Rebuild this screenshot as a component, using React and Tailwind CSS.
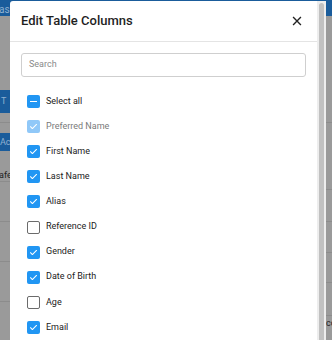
import React from 'react'

const columns = [
  { label: 'Preferred Name', checked: true, disabled: true },
  { label: 'First Name', checked: true },
  { label: 'Last Name', checked: true },
  { label: 'Alias', checked: true },
  { label: 'Reference ID', checked: false },
  { label: 'Gender', checked: true },
  { label: 'Date of Birth', checked: true },
  { label: 'Age', checked: false },
  { label: 'Email', checked: true },
]

function Box({ checked, disabled, indeterminate }) {
  if (indeterminate) {
    return (
      <span className="w-[13px] h-[13px] rounded-[2px] bg-[#2196f3] flex items-center justify-center shrink-0">
        <span className="w-[7px] h-[1.5px] bg-white" />
      </span>
    )
  }
  if (!checked) {
    return <span className="w-[13px] h-[13px] rounded-[2px] border-[1.5px] border-[#6b6b6b] shrink-0" />
  }
  return (
    <span className={`w-[13px] h-[13px] rounded-[2px] flex items-center justify-center shrink-0 ${disabled ? 'bg-[#90c8f8]' : 'bg-[#2196f3]'}`}>
      <svg width="9" height="9" viewBox="0 0 24 24" fill="none">
        <path d="M4 12.5l5 5L20 6.5" stroke="white" strokeWidth="2.8" strokeLinecap="round" strokeLinejoin="round" />
      </svg>
    </span>
  )
}

export default function App() {
  return (
    <div className="relative w-[332px] h-[340px] overflow-hidden bg-[#9a9a9a] font-['Roboto','Liberation_Sans',sans-serif]">
      {/* page behind the backdrop */}
      <div className="flex flex-col">
        <div className="h-[16px] bg-[#1a5c9b] flex items-end justify-between text-[10px] leading-[12px] text-[#8fb0d0] px-0">
          <span className="-ml-[1px]">as</span>
          <span />
        </div>
        <div className="flex justify-between">
          <div className="w-[10px] flex flex-col">
            <div className="h-[74px]" />
            <div className="h-[23px] bg-[#1a5c9b] text-[9px] leading-[23px] text-[#8fb0d0] pl-[1px]">T</div>
            <div className="h-[10px] border-b border-[#8c8c8c]" />
            <div className="h-[10px]" />
            <div className="h-[18px] bg-[#1a5c9b] text-[9px] leading-[18px] text-[#8fb0d0]">Act</div>
            <div className="h-[31px] border-b border-[#8c8c8c] flex items-end text-[9px] leading-[12px] text-[#222] -ml-[1px]">afe</div>
            <div className="h-[40px] border-b border-[#8c8c8c]" />
            <div className="h-[40px] border-b border-[#8c8c8c]" />
            <div className="h-[40px] border-b border-[#8c8c8c]" />
          </div>
          <div className="w-[6px] flex flex-col overflow-hidden">
            <div className="h-[107px] border-b border-[#8c8c8c]" />
            <div className="h-[67px] border-b border-[#8c8c8c]" />
            <div className="h-[32px] border-b border-[#8c8c8c]" />
            <div className="h-[31px] border-b border-[#8c8c8c]" />
            <div className="h-[30px] border-b border-[#8c8c8c]" />
            <div className="h-[33px] border-b border-[#8c8c8c]" />
            <div className="h-[14px] text-[9px] leading-[14px] text-[#222] whitespace-nowrap">co</div>
          </div>
        </div>
      </div>

      {/* dialog */}
      <div className="absolute left-[10px] top-[1px] w-[316px] h-[360px] bg-white rounded-t-[3px] flex">
        <div className="flex-1 flex flex-col">
          <div className="h-[41px] border-b border-[#e4e4e4] flex items-center justify-between pl-[11px] pr-[15px]">
            <span className="text-[13px] font-medium text-[#1f1f1f]">Edit Table Columns</span>
            <svg width="10" height="10" viewBox="0 0 14 14">
              <path d="M1.5 1.5l11 11M12.5 1.5l-11 11" stroke="#222" strokeWidth="1.9" />
            </svg>
          </div>
          <div className="px-[11px] pt-[11px]">
            <div className="h-[24px] border border-[#cfcfcf] rounded-[3px] flex items-center pl-[7px] text-[9px] text-[#8a8a8a]">
              Search
            </div>
          </div>
          <div className="flex flex-col pl-[17px] pt-[12px] text-[9px] text-[#222]">
            <div className="h-[25.1px] flex items-center gap-[6px]">
              <Box indeterminate />
              <span>Select all</span>
            </div>
            {columns.map((c) => (
              <div key={c.label} className="h-[25.1px] flex items-center gap-[6px]">
                <Box checked={c.checked} disabled={c.disabled} />
                <span className={c.disabled ? 'text-[#7a7a7a]' : ''}>{c.label}</span>
              </div>
            ))}
          </div>
        </div>
        <div className="w-[9px] bg-[#ededed] flex justify-center pt-[2px]">
          <div className="w-[5px] h-full bg-[#c1c1c1] rounded-full" />
        </div>
      </div>
    </div>
  )
}
